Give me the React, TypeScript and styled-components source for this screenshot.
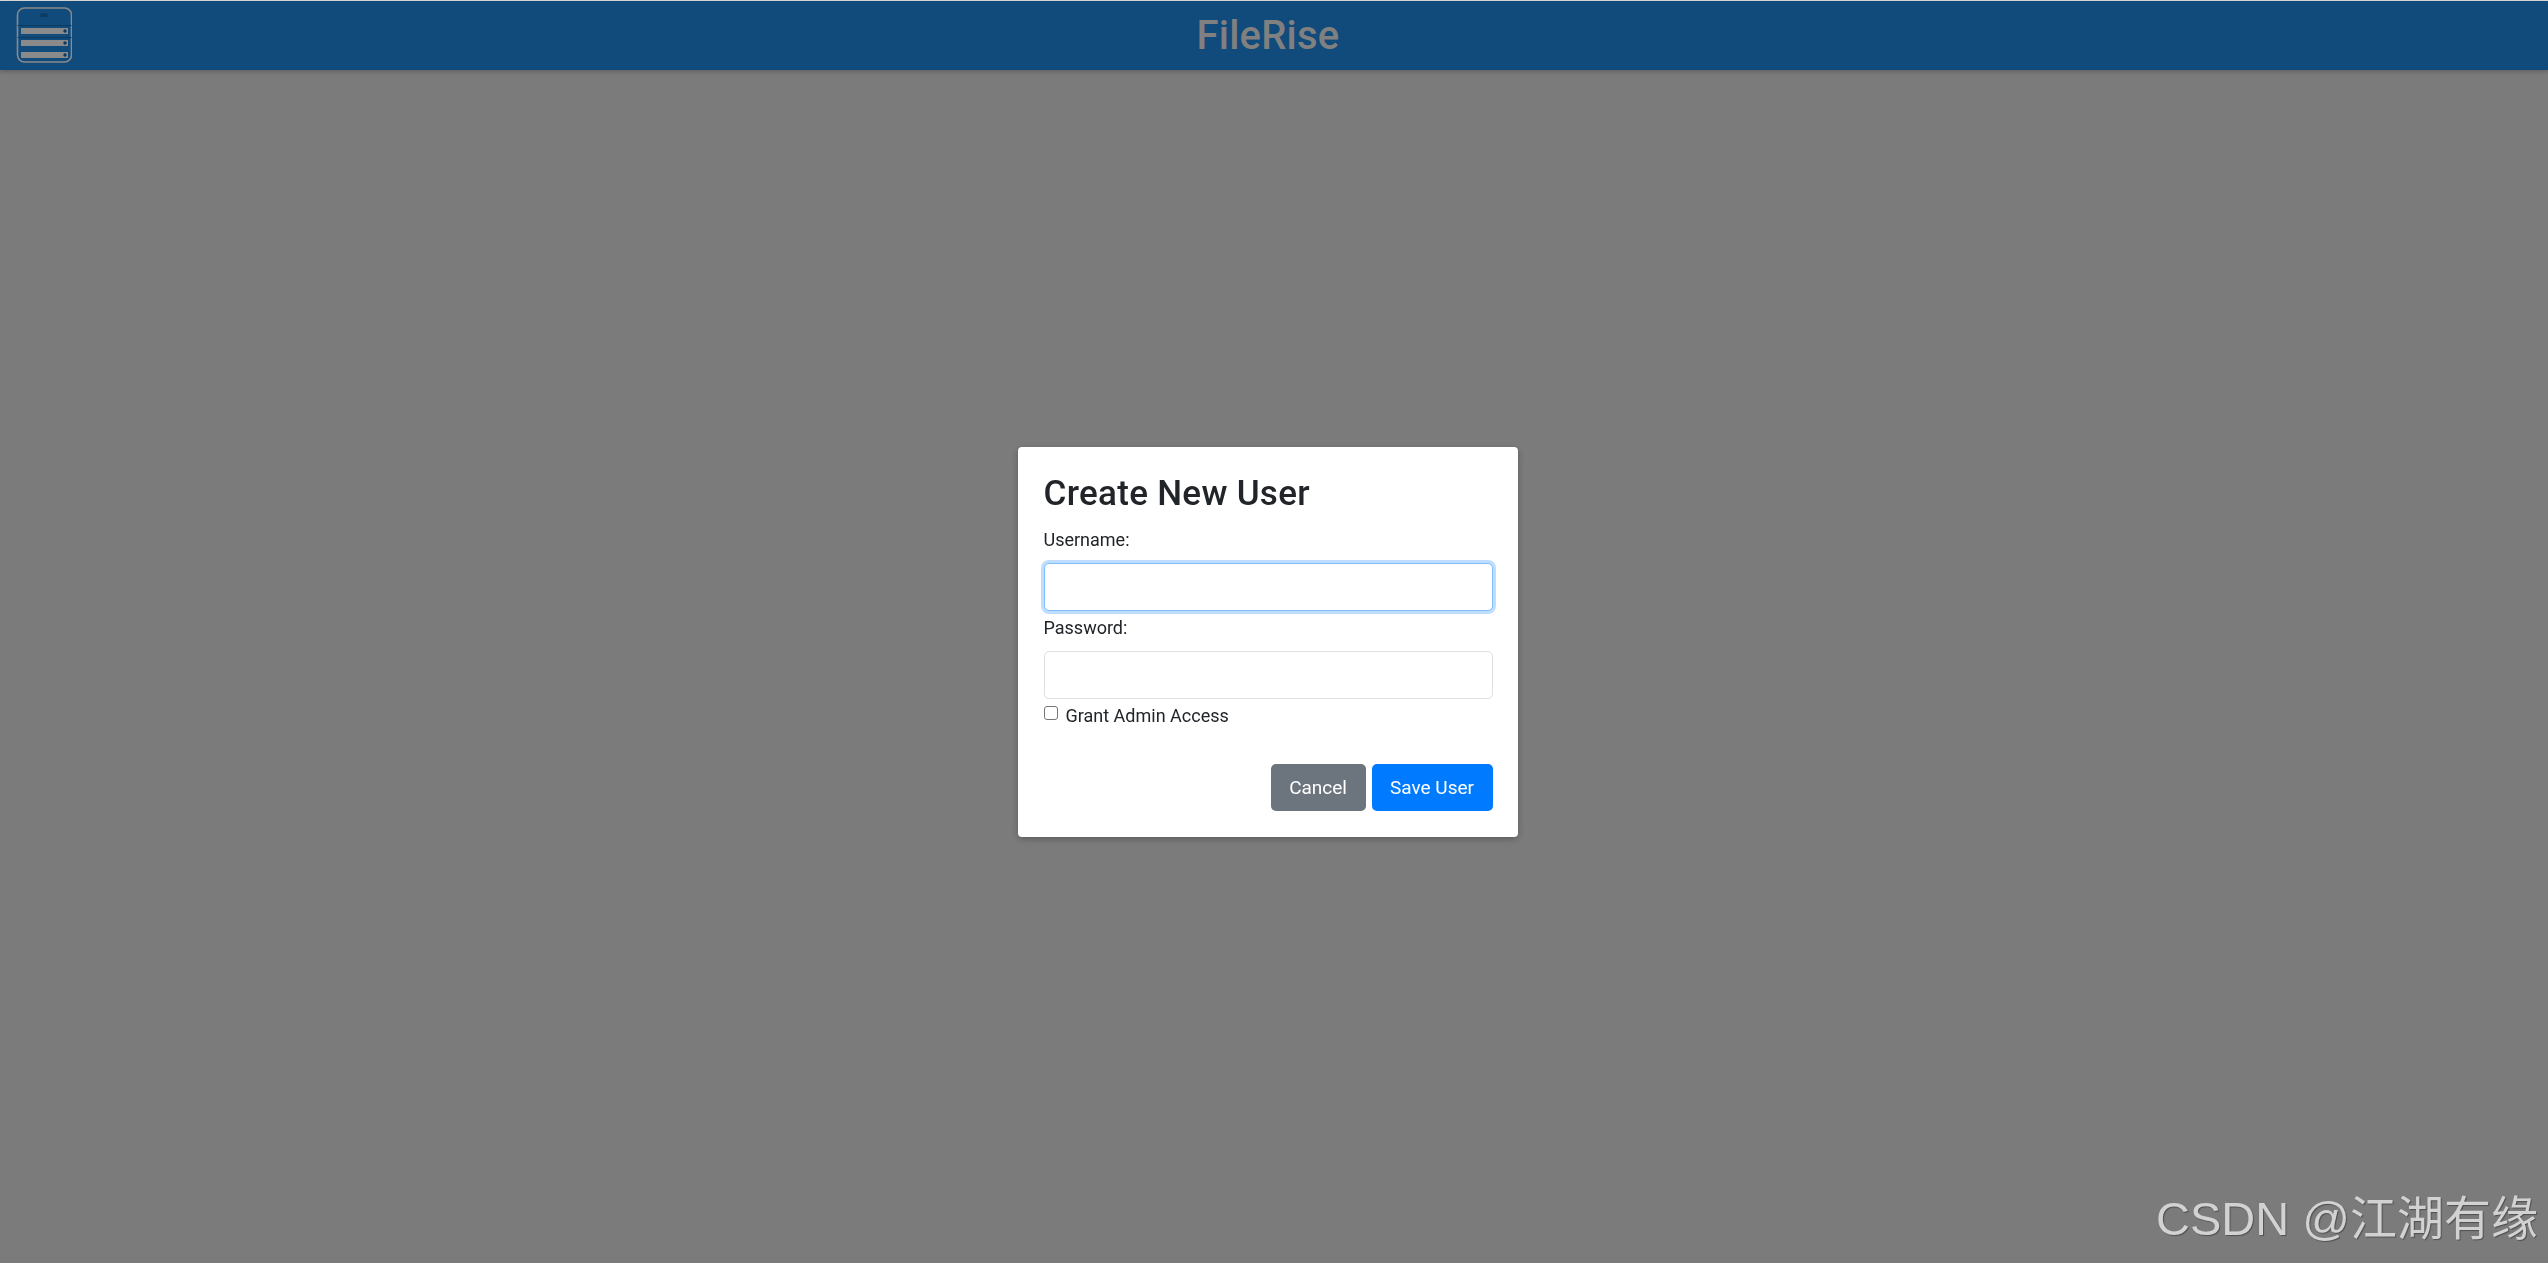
import React from 'react';
import styled, { createGlobalStyle } from 'styled-components';

const GlobalStyle = createGlobalStyle`
  html, body {
    margin: 0;
    padding: 0;
    height: 100%;
  }
  body {
    background: #7b7b7b;
    font-family: Roboto, "Noto Sans", "Liberation Sans", sans-serif;
    color: #212529;
    overflow: hidden;
  }
  * {
    box-sizing: border-box;
  }
`;

const Page = styled.div`
  min-height: 100vh;
  display: flex;
  flex-direction: column;
  border-top: 1px solid #d9d9d9;
`;

const Header = styled.header`
  height: 69px;
  background: #114b7b;
  display: flex;
  align-items: center;
  padding: 0 16px;
  position: relative;
  box-shadow: 0 2px 4px rgba(0, 0, 0, 0.2);
`;

const MenuButton = styled.button`
  width: 56px;
  height: 56px;
  padding: 0;
  border: none;
  background: transparent;
  display: flex;
  margin-top: -1px;
`;

const Title = styled.h1`
  flex: 1;
  margin: 0 68px 0 0;
  text-align: center;
  font-size: 40px;
  font-weight: 500;
  color: #808080;
  letter-spacing: 0.2px;
`;

const Overlay = styled.div`
  position: fixed;
  inset: 0;
  display: flex;
  align-items: center;
  justify-content: center;
  padding: 21px 13px 0 0;
`;

const Modal = styled.div`
  width: 500px;
  background: #fff;
  border-radius: 4px;
  padding: 26px 25px 26px 26px;
  box-shadow: 0 2px 6px rgba(0, 0, 0, 0.25);
`;

const ModalTitle = styled.h3`
  margin: 0 0 11px;
  font-size: 35px;
  font-weight: 500;
  line-height: 42px;
  letter-spacing: 0.3px;
  color: #212529;
`;

const Label = styled.label`
  display: block;
  font-size: 18px;
  line-height: 27px;
  margin-bottom: 10px;
  color: #212529;
`;

const Input = styled.input<{ $focused?: boolean }>`
  display: block;
  width: 100%;
  height: 48px;
  margin: 0 0 3px;
  padding: 6px 12px;
  font-size: 18px;
  font-family: inherit;
  border-radius: 5px;
  outline: none;
  border: 1px solid ${(p) => (p.$focused ? '#80bdff' : '#dcdfe3')};
  box-shadow: ${(p) => (p.$focused ? '0 0 0 3px rgba(0, 123, 255, 0.25)' : 'none')};
`;

const CheckRow = styled.label`
  display: flex;
  align-items: flex-start;
  gap: 8px;
  font-size: 18px;
  line-height: 27px;
  color: #212529;
`;

const CheckBox = styled.span`
  width: 14px;
  height: 14px;
  margin-top: 4px;
  border: 1px solid #767676;
  border-radius: 3px;
  background: #fff;
  flex: none;
`;

const Actions = styled.div`
  display: flex;
  justify-content: flex-end;
  gap: 6px;
  margin-top: 35px;
`;

const Button = styled.button<{ $variant: 'secondary' | 'primary' }>`
  height: 47px;
  padding: 0 18.5px;
  border: none;
  border-radius: 5px;
  font-family: inherit;
  font-size: 19px;
  color: #fff;
  background: ${(p) => (p.$variant === 'primary' ? '#007bff' : '#6c757d')};
`;

const Watermark = styled.div`
  position: fixed;
  right: 10px;
  bottom: 14px;
  font-family: "Liberation Sans", "Noto Sans CJK SC", sans-serif;
  font-size: 47px;
  color: #d2d2d2;
  text-shadow: 1px 1px 1px rgba(0, 0, 0, 0.35);
  white-space: nowrap;
`;

function MenuIcon() {
  return (
    <svg width="56" height="56" viewBox="0 0 56 56">
      <rect x="1.5" y="1" width="54" height="54" rx="7" fill="none" stroke="#8a8a8a" strokeWidth="1.6" />
      <rect x="24.5" y="6.5" width="7" height="3.5" fill="#0d3a61" />
      <line x1="1.5" y1="18.5" x2="55.5" y2="18.5" stroke="#0d3a61" strokeWidth="1.2" />
      <line x1="1.5" y1="30.5" x2="55.5" y2="30.5" stroke="#0d3a61" strokeWidth="1.2" />
      {[20, 32, 44].map((y) => (
        <g key={y}>
          <rect x="5" y={y + 1} width="47" height="6" fill="#8a8a8a" />
          <circle cx="49" cy={y + 4} r="1.7" fill="#0d3a61" />
        </g>
      ))}
    </svg>
  );
}

export default function App() {
  return (
    <>
      <GlobalStyle />
      <Page>
        <Header>
          <MenuButton aria-label="menu">
            <MenuIcon />
          </MenuButton>
          <Title>FileRise</Title>
        </Header>
      </Page>
      <Overlay>
        <Modal>
          <ModalTitle>Create New User</ModalTitle>
          <Label>Username:</Label>
          <Input $focused />
          <Label>Password:</Label>
          <Input type="password" />
          <CheckRow>
            <CheckBox />
            Grant Admin Access
          </CheckRow>
          <Actions>
            <Button $variant="secondary">Cancel</Button>
            <Button $variant="primary">Save User</Button>
          </Actions>
        </Modal>
      </Overlay>
      <Watermark>CSDN @江湖有缘</Watermark>
    </>
  );
}
